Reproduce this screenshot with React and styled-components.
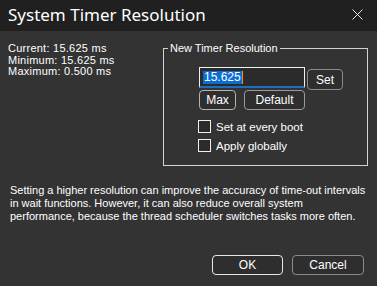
import React from 'react'
import styled, { createGlobalStyle } from 'styled-components'

const GlobalStyle = createGlobalStyle`
  html, body {
    margin: 0;
    padding: 0;
    background: #333333;
  }
  body {
    font-family: "Liberation Sans", Arial, sans-serif;
    color: #ffffff;
  }
`

function App() {
  return (
    <>
      <GlobalStyle />
      <Window>
        <TitleBar>
          <Title>System Timer Resolution</Title>
          <CloseButton aria-label="Close">
            <svg width="11" height="11" viewBox="0 0 11 11">
              <path d="M0.5 0.5 L10.5 10.5 M10.5 0.5 L0.5 10.5" stroke="#e6e6e6" strokeWidth="1" fill="none" />
            </svg>
          </CloseButton>
        </TitleBar>
        <Body>
          <TopRow>
            <Info>
              <div>Current: 15.625 ms</div>
              <div>Minimum: 15.625 ms</div>
              <div>Maximum: 0.500 ms</div>
            </Info>
            <Group>
              <Legend>New Timer Resolution</Legend>
              <Controls>
                <InputRow>
                  <TextBox>
                    <Selected>15.625</Selected>
                    <Caret />
                  </TextBox>
                  <Button $width={36} $top={2} $height={21} $border="#8c8c8c">Set</Button>
                </InputRow>
                <ButtonRow>
                  <Button $width={37} $height={20} $border="#b4b4b4">Max</Button>
                  <Button $width={61} $height={20} $border="#9a9a9a">Default</Button>
                </ButtonRow>
                <Checks>
                  <CheckRow>
                    <Box />
                    <span>Set at every boot</span>
                  </CheckRow>
                  <CheckRow>
                    <Box />
                    <span>Apply globally</span>
                  </CheckRow>
                </Checks>
              </Controls>
            </Group>
          </TopRow>
          <Description>
            Setting a higher resolution can improve the accuracy of time-out intervals in wait functions. However, it can also reduce overall system performance, because the thread scheduler switches tasks more often.
          </Description>
          <Footer>
            <Button $width={71} $height={20} $border="#e8e8e8">OK</Button>
            <Button $width={72} $height={20} $border="#8c8c8c">Cancel</Button>
          </Footer>
        </Body>
      </Window>
    </>
  )
}

export default App

const Window = styled.div`
  width: 377px;
  height: 286px;
  display: flex;
  flex-direction: column;
  background: #333333;
  overflow: hidden;
`

const TitleBar = styled.div`
  height: 31px;
  background: #202020;
  display: flex;
  align-items: center;
  justify-content: space-between;
  padding: 0 14px 0 8px;
  box-sizing: border-box;
`

const Title = styled.div`
  font-family: "Noto Sans", "Open Sans", sans-serif;
  font-size: 17px;
  color: #ffffff;
  margin-top: -2px;
`

const CloseButton = styled.div`
  width: 11px;
  height: 11px;
  display: flex;
  margin-top: -2px;
`

const Body = styled.div`
  flex: 1;
  display: flex;
  flex-direction: column;
  padding: 12px 9px 0 8px;
  font-size: 11px;
`

const TopRow = styled.div`
  display: flex;
  justify-content: space-between;
  align-items: flex-start;
`

const Info = styled.div`
  line-height: 11.5px;
  letter-spacing: 0.25px;
  color: #ffffff;
`

const Group = styled.fieldset`
  width: 205px;
  box-sizing: border-box;
  margin: 0;
  padding: 0 0 13px 0;
  border: 1px solid #d2d2d2;
`

const Legend = styled.legend`
  margin-left: 4px;
  padding: 0 2px;
  line-height: 11px;
  font-size: 11px;
`

const Controls = styled.div`
  display: flex;
  flex-direction: column;
  padding: 13px 0 0 34px;
`

const InputRow = styled.div`
  display: flex;
  align-items: flex-start;
  gap: 2px;
  padding-left: 1px;
`

const TextBox = styled.div`
  width: 106px;
  height: 21px;
  box-sizing: border-box;
  border: 1px solid #f0f0f0;
  border-bottom: 2px solid #1a6fc4;
  background: #2b2b2b;
  display: flex;
  align-items: center;
  padding-left: 3px;
  font-size: 12px;
`

const Selected = styled.span`
  background: #0a6ed1;
  color: #ffffff;
  padding: 0 1px;
  line-height: 13px;
`

const Caret = styled.span`
  width: 1px;
  height: 13px;
  background: #ff8a2a;
`

const Button = styled.div`
  width: ${p => p.$width}px;
  height: ${p => p.$height}px;
  margin-top: ${p => p.$top || 0}px;
  box-sizing: border-box;
  border: 1px solid ${p => p.$border};
  border-radius: 4px;
  background: #2e2e2e;
  color: #ffffff;
  display: flex;
  align-items: center;
  justify-content: center;
  font-size: 12px;
`

const ButtonRow = styled.div`
  display: flex;
  gap: 8px;
  padding-left: 1px;
`

const Checks = styled.div`
  display: flex;
  flex-direction: column;
  gap: 6px;
  margin-top: 10px;
`

const CheckRow = styled.div`
  display: flex;
  align-items: center;
  gap: 5px;
  height: 13px;
  font-size: 11.5px;
`

const Box = styled.span`
  width: 13px;
  height: 13px;
  box-sizing: border-box;
  border: 1px solid #f0f0f0;
  background: #2b2b2b;
`

const Description = styled.p`
  margin: 18px 0 0 2px;
  line-height: 13px;
  font-size: 11px;
`

const Footer = styled.div`
  margin-top: auto;
  margin-bottom: 11px;
  margin-right: 4px;
  display: flex;
  justify-content: flex-end;
  gap: 9px;
`
